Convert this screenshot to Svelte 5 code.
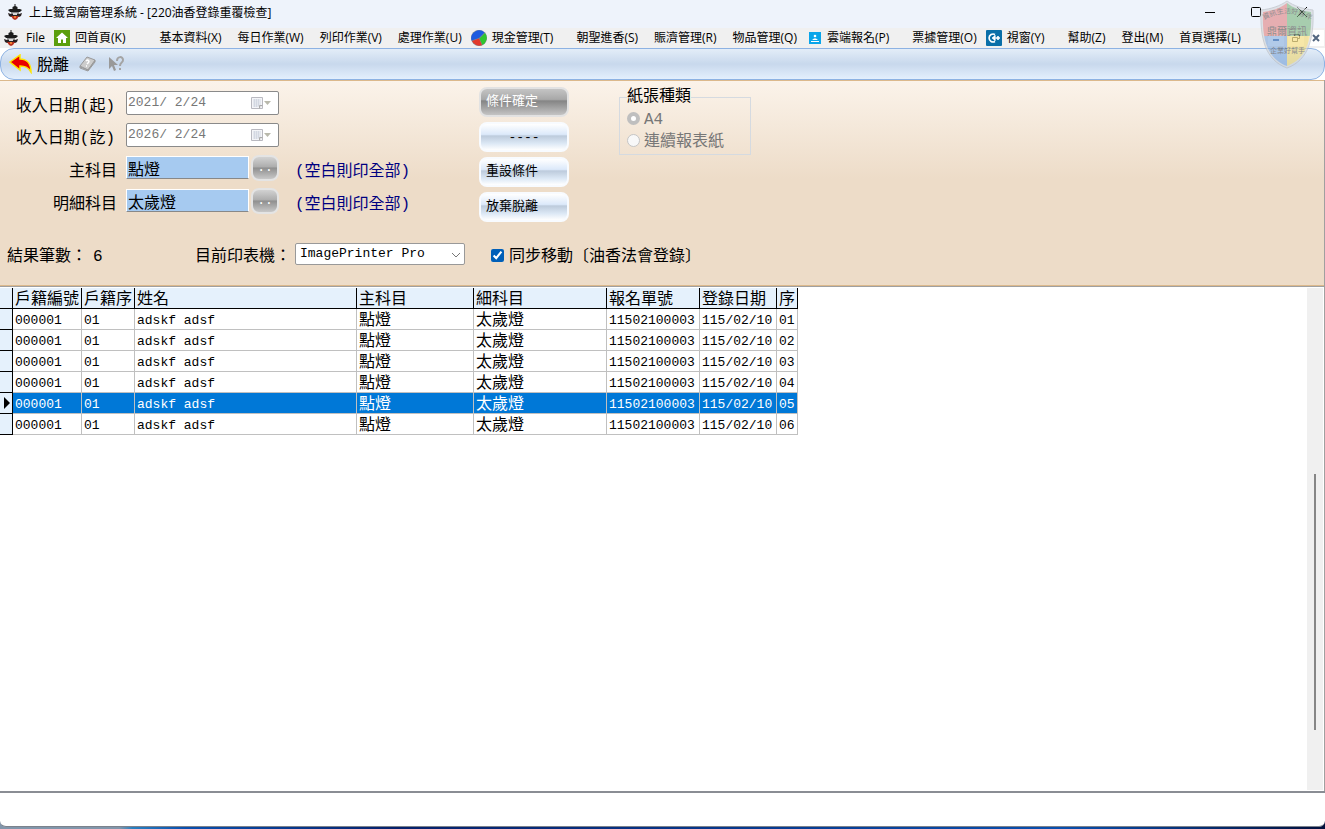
<script>
    let mainSubject = $state('點燈');
    let detailSubject = $state('太歲燈');
    let syncMove = $state(true);
    let selected = $state(4);

    const menus = [
        { text: 'File' },
        { text: '回首頁(K)', icon: 'home', wide: true },
        { text: '基本資料(X)' },
        { text: '每日作業(W)' },
        { text: '列印作業(V)' },
        { text: '處理作業(U)' },
        { text: '現金管理(T)', icon: 'pie', space: true },
        { text: '朝聖進香(S)' },
        { text: '賑濟管理(R)' },
        { text: '物品管理(Q)' },
        { text: '雲端報名(P)', icon: 'person', space: true },
        { text: '票據管理(O)' },
        { text: '視窗(Y)', icon: 'arrow', space: true },
        { text: '幫助(Z)' },
        { text: '登出(M)' },
        { text: '首頁選擇(L)' }
    ];

    const columns = ['戶籍編號', '戶籍序', '姓名', '主科目', '細科目', '報名單號', '登錄日期', '序'];

    const rows = ['01', '02', '03', '04', '05', '06'].map((no) => [
        '000001', '01', 'adskf adsf', '點燈', '太歲燈', '11502100003', '115/02/10', no
    ]);
</script>

{#snippet temple()}
    <svg class="temple" viewBox="0 0 16 16" aria-hidden="true">
        <path d="M7.500 0h1v2l2 1v2H5.500V3l2-1z" fill="#1c1c1c" />
        <path d="M3 5h10l2 1-2 2H3L1 6z" fill="#1c1c1c" />
        <path d="M4 8h8v2H4z" fill="#8a8a8a" />
        <path d="M1 9l3 1h8l3-1-1 3-2 1H4l-2-1z" fill="#2a2222" />
        <path d="M4 12h8l-2 3-2 1-2-1z" fill="#b8321e" />
        <path d="M6 9h4v2H6z" fill="#d8d8d8" />
        <path d="M7 12h2v2H7z" fill="#f08030" />
    </svg>
{/snippet}

{#snippet calendar()}
    <svg class="calendar" width="22" height="14" viewBox="0 0 22 14" aria-hidden="true">
        <path d="M1.500 1.500h11v11h-11z" fill="#f4f5f8" stroke="#b9b9c0" />
        <path d="M3 4h8M3 6h8M3 8h8M3 10h6M4.500 3v8M6.500 3v8M8.500 3v7" stroke="#d3d8e2" stroke-width="1" />
        <path d="M9.500 12.500v-3h3" fill="#ddd" stroke="#aaa" />
        <path d="M14 5h7l-3.500 4z" fill="#b9b9ac" />
    </svg>
{/snippet}

<div class="desktop">
<div class="window">
    <header class="title-bar">
        {@render temple()}
        <h1>上上籤宮廟管理系統 - [220油香登錄重覆檢查]</h1>
        <div class="caption-buttons">
            <button type="button" aria-label="最小化"><svg width="12" height="12" viewBox="0 0 12 12"><path d="M1 6.500h10" stroke="#000" /></svg></button>
            <button type="button" aria-label="最大化"><svg width="12" height="12" viewBox="0 0 12 12"><rect x="1.500" y="1.500" width="9" height="9" rx="1" fill="none" stroke="#000" /></svg></button>
            <button type="button" aria-label="關閉"><svg width="12" height="12" viewBox="0 0 12 12"><path d="M1 1l10 10M11 1L1 11" stroke="#000" /></svg></button>
        </div>
    </header>

    <nav class="menu-bar">
        {@render temple()}
        {#each menus as menu}
        <button type="button" class:space={menu.space} class:wide={menu.wide}>
            {#if menu.icon === 'home'}
            <svg width="16" height="16" viewBox="0 0 16 16"><path d="M0 0h16v16H0z" fill="#5c9e0c" /><path d="M8 2.500L2 8h2v5h3V9.500h2V13h3V8h2z" fill="#fff" /></svg>
            {:else if menu.icon === 'pie'}
            <svg width="16" height="16" viewBox="0 0 16 16"><circle cx="8" cy="8" r="8" fill="#7d8794" /><path d="M8 8L.5 10.500A8 8 0 0 1 13.500 2.500z" fill="#1d5be0" /><path d="M8.500 8.500L14 3A8 8 0 0 1 11.500 15z" fill="#2fc52f" /><path d="M8 8.500l3 6.700A8 8 0 0 1 1 11z" fill="#e23a2c" /></svg>
            {:else if menu.icon === 'person'}
            <svg width="16" height="12" viewBox="-3 0 16 12"><path d="M0 0h12v12H0z" fill="#0aa5ea" /><circle cx="6" cy="4" r="1.300" fill="#fff" /><path d="M3 8l2-1.500h2L9 8zM2 9h8v1H2z" fill="#fff" /></svg>
            {:else if menu.icon === 'arrow'}
            <svg width="16" height="16" viewBox="0 0 16 16"><rect width="16" height="16" rx="1" fill="#0a6fa8" /><path d="M9 4.500A4 4 0 1 0 9 11.500M6 8h8M9.500 5.500L7 8l2.500 2.500M12 6v4" fill="none" stroke="#fff" stroke-width="1.600" /></svg>
            {/if}
            <span>{menu.text}</span>
        </button>
        {/each}
        <div class="child-buttons">
            <button type="button" aria-label="最小化子視窗"><svg width="10" height="10" viewBox="0 0 10 10"><path d="M2 7h6" stroke="#2a5a9a" stroke-width="2" /></svg></button>
            <button type="button" aria-label="還原子視窗"><svg width="10" height="10" viewBox="0 0 10 10"><path d="M3.500 3V1.500h5v4H7M1.500 4.500h5v4h-5z" fill="none" stroke="#555" /></svg></button>
            <button type="button" aria-label="關閉子視窗"><svg width="10" height="10" viewBox="0 0 10 10"><path d="M2 2l6 6M8 2L2 8" stroke="#52657f" stroke-width="2" /></svg></button>
        </div>
    </nav>

    <svg class="shield" viewBox="0 0 56 70" aria-hidden="true">
        <defs>
            <clipPath id="shield-shape"><path d="M28 3C22 8 13 11 4 12c-1 25 3 46 24 54C49 58 53 37 52 12 43 11 34 8 28 3z" /></clipPath>
            <path id="motto" d="M5 20Q28 7 51 20" />
        </defs>
        <path d="M28 1C21 6 12 9 2 10c-1 28 4 50 26 58C50 60 55 38 54 10 44 9 35 6 28 1z" fill="#d5d8dc" stroke="#b8bcc2" />
        <g clip-path="url(#shield-shape)">
            <path d="M0 0h28v36H0z" fill="#e28a8a" />
            <path d="M28 0h28v36H28z" fill="#82b985" />
            <path d="M0 36h28v34H0z" fill="#88aede" />
            <path d="M28 36h28v34H28z" fill="#f3db7a" />
        </g>
        <text class="small"><textPath href="#motto">資訊生活好夥伴</textPath></text>
        <text class="large" x="8" y="35">鼎爾資訊</text>
        <text class="small" x="11" y="53">企業好幫手</text>
    </svg>

    <div class="toolbar">
        <button type="button">
            <svg width="24" height="20" viewBox="0 0 24 20" aria-hidden="true"><path d="M1 8l10-7v4c7 0 11 5 11 13-3-5-6-6-11-6v4z" fill="#e80000" stroke="#ffe600" stroke-width="1.500" /></svg>
            <span>脫離</span>
        </button>
        <button type="button" aria-label="說明" disabled>
            <svg width="18" height="18" viewBox="0 0 18 18"><path d="M1 11L8 2l8 3-7 10z" fill="#ccc" stroke="#999" /><path d="M1 11v2l8 3 7-9V5M1 12l8 3 7-9" fill="none" stroke="#999" /><path d="M7 6c2-2 4 0 2 2l-1 1M7 11h1" fill="none" stroke="#fff" stroke-width="1.500" /></svg>
        </button>
        <button type="button" aria-label="這是什麼" disabled>
            <svg width="18" height="18" viewBox="0 0 18 18"><path d="M2 2v12l3-3 2 5 2-1-2-5h4z" fill="#999" /><path d="M10 6c0-5 6-5 6-1 0 3-3 2-3 6M13 13v2" fill="none" stroke="#a4a4a4" stroke-width="2" /></svg>
        </button>
    </div>

    <main>
        <form class="panel" onsubmit={(e) => e.preventDefault()}>
            <div class="conditions">
                <div class="filters">
                    <label class="date-label" for="date-from">收入日期(起)</label>
                    <div class="date"><input id="date-from" value="2021/ 2/24" disabled />{@render calendar()}</div>
                    <span></span>

                    <label class="date-label" for="date-to">收入日期(訖)</label>
                    <div class="date"><input id="date-to" value="2026/ 2/24" disabled />{@render calendar()}</div>
                    <span></span>

                    <label for="main-subject">主科目</label>
                    <div class="lookup"><input id="main-subject" bind:value={mainSubject} /><button type="button" aria-label="選擇主科目">..</button></div>
                    <span class="note">(空白則印全部)</span>

                    <label for="detail-subject">明細科目</label>
                    <div class="lookup"><input id="detail-subject" bind:value={detailSubject} /><button type="button" aria-label="選擇明細科目">..</button></div>
                    <span class="note">(空白則印全部)</span>
                </div>

                <div class="actions">
                    <button type="submit" disabled>條件確定</button>
                    <button type="button" class="dashes">----</button>
                    <button type="button">重設條件</button>
                    <button type="button">放棄脫離</button>
                </div>

                <fieldset disabled>
                    <legend>紙張種類</legend>
                    <label><input type="radio" name="paper" checked /><span>A4</span></label>
                    <label><input type="radio" name="paper" /><span>連續報表紙</span></label>
                </fieldset>
            </div>

            <div class="summary">
                <div class="count">結果筆數：<output>6</output></div>
                <label for="printer">目前印表機：</label>
                <div class="printer">
                    <select id="printer"><option>ImagePrinter Pro</option></select>
                    <svg width="10" height="6" viewBox="0 0 10 6" aria-hidden="true"><path d="M1 1l4 4 4-4" fill="none" stroke="#777" /></svg>
                </div>
                <label class="sync"><input type="checkbox" bind:checked={syncMove} /><span>同步移動〔油香法會登錄〕</span></label>
            </div>
        </form>

        <div class="results">
            <table>
                <colgroup>
                    <col class="c-mark" /><col class="c-id" /><col class="c-seq" /><col class="c-name" /><col class="c-main" />
                    <col class="c-detail" /><col class="c-form" /><col class="c-date" /><col class="c-no" />
                </colgroup>
                <thead>
                    <tr>
                        <th class="mark"></th>
                        {#each columns as column}
                        <th>{column}</th>
                        {/each}
                    </tr>
                </thead>
                <tbody>
                    {#each rows as row, index}
                    <tr class:selected={index === selected} onclick={() => selected = index}>
                        <td class="mark">{#if index === selected}<svg width="6" height="12" viewBox="0 0 6 12"><path d="M0 0l6 6-6 6z" /></svg>{/if}</td>
                        {#each row as cell}
                        <td>{cell}</td>
                        {/each}
                    </tr>
                    {/each}
                </tbody>
            </table>
            <div class="scrollbar"><div class="thumb"></div></div>
        </div>
    </main>

    <footer></footer>
</div>
</div>

<style>
:global(body) {
    margin: 0;
}
.desktop {
    display: flex;
    min-height: 100vh;
    background: linear-gradient(90deg, #8296ab 9%, #2a80c0 10%, #0a4fae 14%, #06206a 30%, #0a4fae 80%, #03103c);
}
.desktop, input, select, button {
    font-family: "Liberation Mono", "Noto Sans CJK TC", monospace;
    font-size: 16px;
    line-height: 20px;
    color: #000;
}
.window {
    position: relative;
    display: flex;
    flex: 1;
    flex-direction: column;
    min-width: 0;
    margin-bottom: 2px;
    border-bottom: 1px solid #7c828c;
    border-radius: 0 0 6px 6px;
    background: #fff;
    overflow: hidden;
}
button {
    padding: 0;
    border: 0;
    background: none;
}
svg {
    display: block;
    flex: none;
}
.temple {
    width: 16px;
    height: 16px;
}

.title-bar {
    display: flex;
    align-items: center;
    gap: 6px;
    height: 28px;
    padding: 0 17px 4px 7px;
    box-sizing: border-box;
    background: #eef3fb;
}
h1 {
    flex: 1;
    margin: 0;
    padding-top: 1px;
    font: 12px/20px "Open Sans", "Noto Sans CJK TC", sans-serif;
}
.caption-buttons {
    display: flex;
    gap: 34px;
}

.menu-bar {
    display: flex;
    align-items: center;
    height: 20px;
    padding: 0 1px 0 3px;
    background: #f0f0f0;
    white-space: nowrap;
}
.menu-bar > button {
    display: flex;
    align-items: center;
    gap: 5px;
    margin-left: 7px;
    margin-right: 9px;
    font: 12px/20px "Open Sans", "Noto Sans CJK TC", sans-serif;
}
.menu-bar > button:has(svg) {
    margin-left: 0;
}
.menu-bar > .space {
    margin-right: 16px;
}
.menu-bar > .wide {
    margin-right: 27px;
}
.child-buttons {
    display: flex;
    gap: 4px;
    margin-left: auto;
}
.child-buttons button {
    padding: 3px;
    background: #fff;
}
.shield {
    position: absolute;
    top: 0;
    right: 10px;
    width: 56px;
    height: 70px;
    opacity: 0.65;
    pointer-events: none;
}
.shield text {
    font-family: "Noto Sans CJK TC", sans-serif;
    fill: #555;
}
.shield .small {
    font-size: 7px;
}
.shield .large {
    font-size: 10px;
}

.toolbar {
    display: flex;
    align-items: center;
    gap: 10px;
    height: 32px;
    padding: 0 8px;
    box-sizing: border-box;
    border: 1px solid #8db2e3;
    border-radius: 14px;
    background: linear-gradient(#e3edf8, #c9d9ed 48%, #c9d9ed 52%, #e3effd);
}
.toolbar button {
    display: flex;
    align-items: center;
    gap: 4px;
}
.toolbar span {
    padding-top: 3px;
}

main {
    display: flex;
    flex: 1;
    flex-direction: column;
    border-right: 1px solid #a0a0a0;
}
.panel {
    display: flex;
    flex-direction: column;
    gap: 17px;
    padding: 6px 0 17px;
    border-top: 1px solid #dcb98c;
    border-bottom: 1px solid #dcb98c;
    background: linear-gradient(#fbf3ea, #eddcc8 48%, #eddcc8);
    white-space: nowrap;
}
.conditions {
    display: flex;
    align-items: flex-start;
    height: 138px;
}
.filters {
    display: grid;
    grid-template-columns: 117px 153px 165px;
    grid-template-rows: 32px 32px 33px 33px;
    column-gap: 9px;
    align-items: center;
    width: 479px;
}
.filters label {
    padding-top: 8px;
    text-align: right;
}
.filters .date-label {
    padding-right: 2px;
}
.note {
    padding: 8px 0 0 7px;
    color: #000080;
}
.date {
    display: flex;
    align-items: center;
    height: 24px;
    padding-right: 6px;
    box-sizing: border-box;
    border: 1px solid #8a8a8a;
    border-radius: 2px;
    background: #fff;
}
.date input {
    flex: 1;
    min-width: 0;
    padding: 0 1px;
    border: 0;
    background: none;
    color: #777;
    font-size: 13px;
}
.lookup {
    display: flex;
    align-items: center;
    gap: 2px;
}
.lookup input {
    flex: 1;
    min-width: 0;
    height: 23px;
    padding: 0 1px;
    box-sizing: border-box;
    border: 1px solid #fff;
    border-bottom: 1px solid #888;
    background: #a6caf0;
}
.lookup button {
    width: 28px;
    height: 26px;
    border: 2px solid #e4e4e4;
    border-radius: 8px;
    background: linear-gradient(#d2d2d2, #adadad 45%, #8f8f8f 50%, #c8c8c8);
    color: #fff;
    font-size: 13px;
}
.actions {
    display: flex;
    flex-direction: column;
    gap: 5px;
    width: 90px;
}
.actions button {
    height: 30px;
    padding: 0 5px 4px;
    border: 2px solid #f8fbff;
    border-radius: 8px;
    background: linear-gradient(#fff, #dce9fa 40%, #bdcbdc 46%, #dce8f5 75%, #fff);
    font-family: "Noto Sans CJK TC", sans-serif;
    font-size: 13px;
    text-align: left;
}
.actions .dashes {
    padding: 2px 0 0;
    font-family: "Liberation Mono", monospace;
    text-align: center;
}
.actions button:disabled {
    border-color: #e2e2e2;
    background: linear-gradient(#c4c4c4, #a8a8a8 40%, #858585 46%, #c4c4c4);
    color: #fff;
}
fieldset {
    width: 132px;
    margin: 0 0 0 50px;
    padding: 0 3px 3px 7px;
    box-sizing: border-box;
    border: 1px solid #d5dae0;
}
legend {
    padding: 0;
}
fieldset label {
    display: flex;
    align-items: center;
    gap: 4px;
    height: 22px;
    color: #777;
}
fieldset span, .sync span {
    padding-top: 4px;
}
fieldset input {
    width: 13px;
    height: 13px;
    margin: 0;
    appearance: none;
    border: 1px solid #c5c5c5;
    border-radius: 50%;
    background: #f8f8f8;
}
fieldset input:checked {
    border: 4px solid #bfbfbf;
    background: #fff;
}

.summary {
    display: flex;
    align-items: center;
    height: 26px;
    padding-left: 7px;
}
.count, .summary > label:not(.sync) {
    padding-top: 4px;
}
.count {
    width: 188px;
}
.count output {
    padding-left: 6px;
}
.printer {
    position: relative;
    width: 170px;
    margin: 0 26px 3px 4px;
}
.printer select {
    display: block;
    width: 100%;
    height: 22px;
    padding: 0 4px;
    appearance: none;
    border: 1px solid #999;
    border-radius: 2px;
    background: #fff;
    font-size: 13px;
}
.printer svg {
    position: absolute;
    top: 9px;
    right: 4px;
    pointer-events: none;
}
.sync {
    display: flex;
    align-items: center;
    gap: 5px;
}
.sync input {
    width: 13px;
    height: 13px;
    margin: 0;
    accent-color: #005fb8;
}

.results {
    display: flex;
    flex: 1;
    justify-content: space-between;
    align-items: flex-start;
    padding: 1px 1px 1px 0;
    border-top: 1px solid #a0a0a0;
}
table {
    width: 798px;
    table-layout: fixed;
    border-collapse: separate;
    border-spacing: 0;
}
.c-mark { width: 13px; }
.c-id { width: 69px; }
.c-seq { width: 53px; }
.c-name { width: 222px; }
.c-main { width: 117px; }
.c-detail { width: 133px; }
.c-form { width: 93px; }
.c-date { width: 77px; }
.c-no { width: 21px; }
th, td {
    height: 21px;
    padding: 4px 2px 0;
    box-sizing: border-box;
    line-height: 16px;
    white-space: nowrap;
    overflow: hidden;
}
th {
    border-right: 1px solid #000;
    border-bottom: 1px solid #000;
    background: #e5f1fc;
    font-weight: normal;
    text-align: left;
}
td {
    border-right: 1px solid #c0c0c0;
    border-bottom: 1px solid #c0c0c0;
    font-size: 13px;
}
td:nth-child(5), td:nth-child(6) {
    font-size: 16px;
}
td.mark {
    padding: 0 2px 0 4px;
    border-right: 1px solid #000;
    border-bottom: 1px solid #000;
    background: #e5f1fc;
}
.selected td:not(.mark) {
    background: #0078d7;
    color: #fff;
}
.scrollbar {
    display: flex;
    flex-direction: column;
    align-items: center;
    justify-content: flex-end;
    align-self: stretch;
    width: 16px;
    background: #f0f0f0;
}
.thumb {
    width: 2px;
    height: 51%;
    margin-bottom: 60px;
    background: #868686;
}
footer {
    height: 33px;
    border-top: 2px solid #8a8d94;
}
</style>
